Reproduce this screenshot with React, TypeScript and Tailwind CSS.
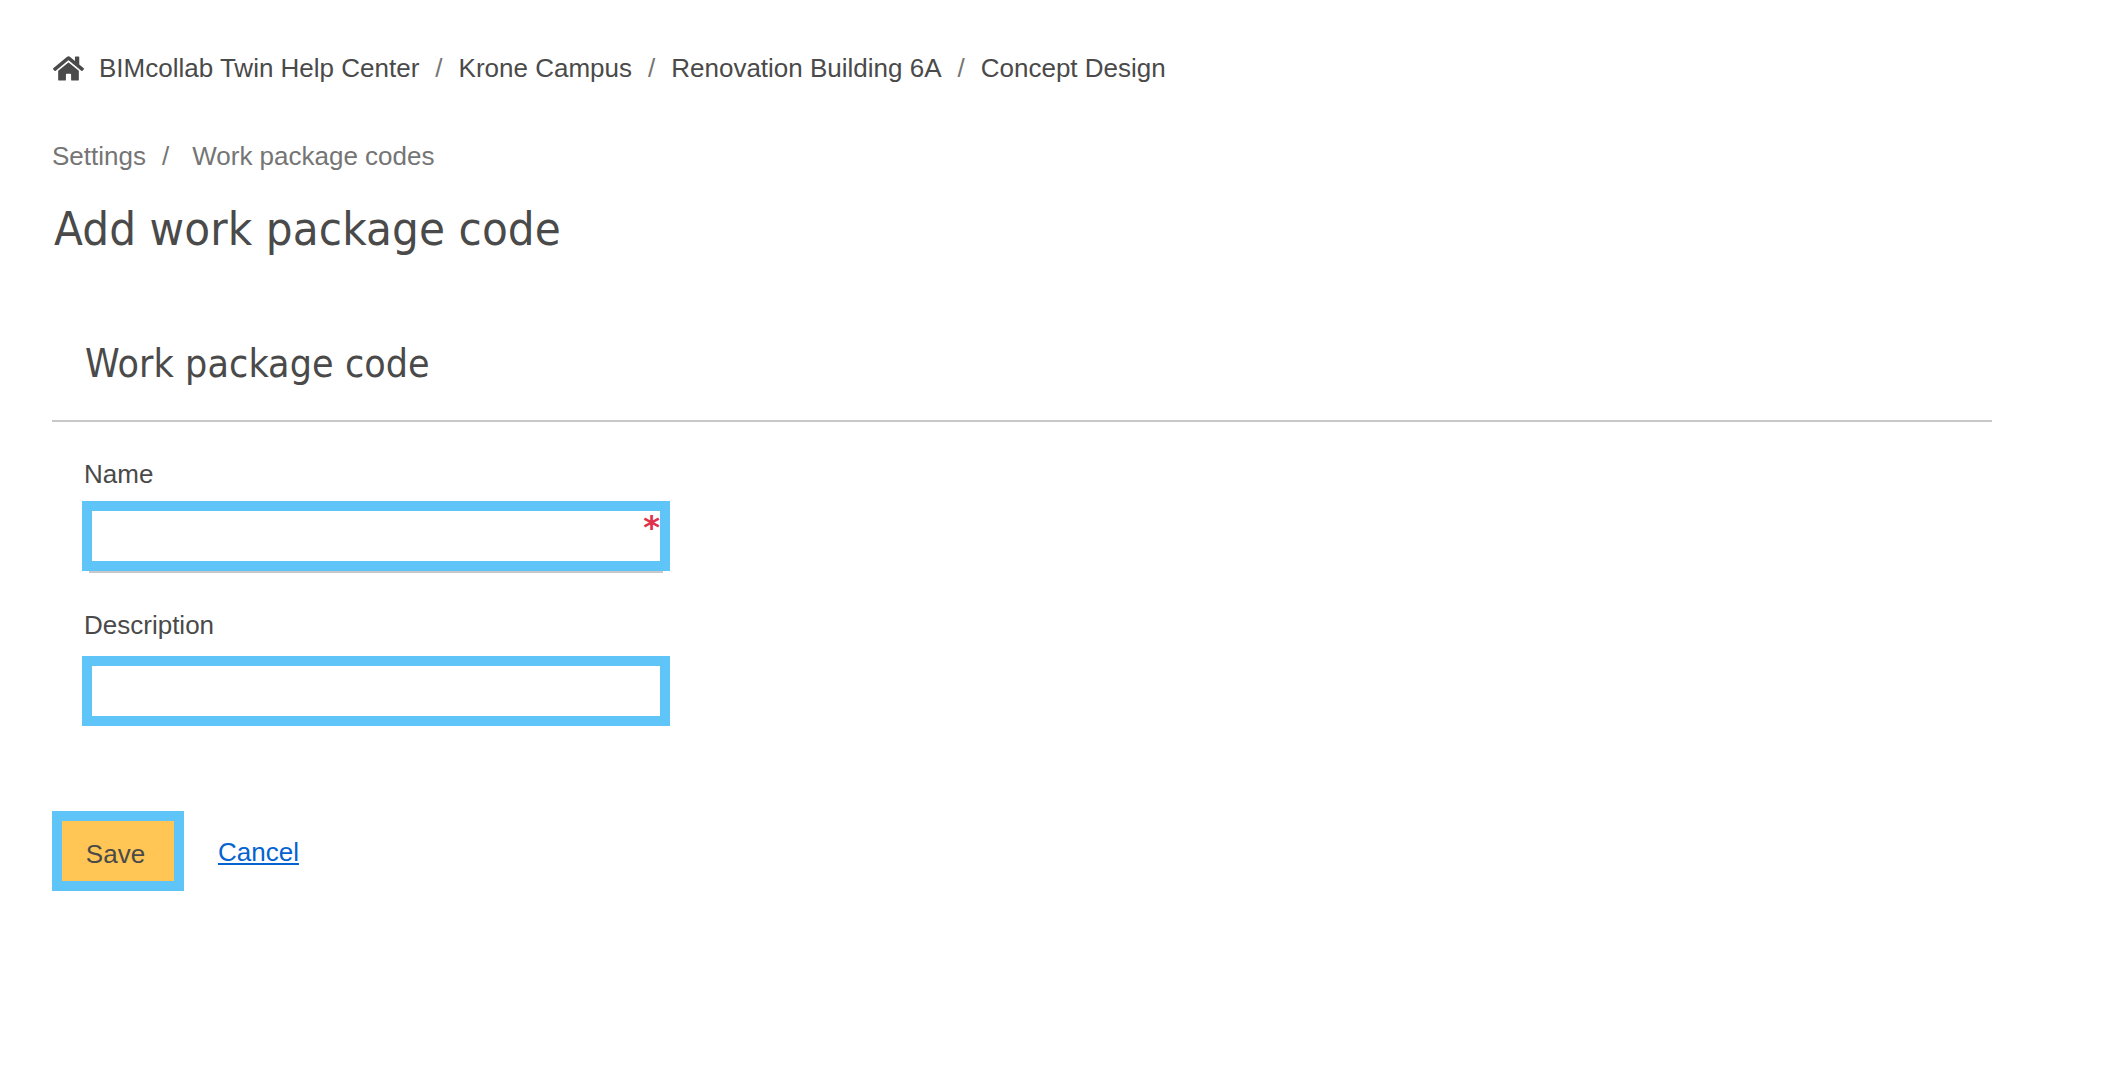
import { FaHome } from 'react-icons/fa';

const crumbs = ['BIMcollab Twin Help Center', 'Krone Campus', 'Renovation Building 6A', 'Concept Design'];

export default function App() {
  return (
    <main className="min-h-screen bg-white pl-[52px] pt-[52px] font-['Liberation_Sans',Arial,sans-serif] text-[#4a4a4a]">
      <nav className="flex h-[32px] items-center text-[26px] leading-[32px]">
        <FaHome className="ml-[1px] mr-[15px] text-[31px] text-[#4a4a4a]" />
        {crumbs.map((c, i) => (
          <span key={c} className="flex items-center">
            {i > 0 && <span className="mx-[16px] text-[#757575]">/</span>}
            <a href="#">{c}</a>
          </span>
        ))}
      </nav>

      <div className="mt-[56px] flex h-[32px] items-center text-[26px] leading-[32px] text-[#757575]">
        <a href="#">Settings</a>
        <span className="ml-[16px] mr-[23px]">/</span>
        <a href="#">Work package codes</a>
      </div>

      <h1 className="mt-[29px] h-[56px] pl-[2px] font-['DejaVu_Sans',sans-serif] text-[47px] font-normal leading-[56px] tracking-[0.1px] font-stretch-condensed">
        Add work package code
      </h1>

      <section className="mt-[85px] w-[1940px] border-b-2 border-[#c8c8c8] pb-[34px] pl-[33px]">
        <h2 className="h-[44px] font-['DejaVu_Sans',sans-serif] text-[39px] font-normal leading-[44px] tracking-[0.07px] font-stretch-condensed">
          Work package code
        </h2>
      </section>

      <form className="pl-[30px]">
        <label className="mt-[37px] block h-[30px] pl-[2px] text-[26px] leading-[30px]">Name</label>
        <div className="relative mt-[12px] w-[588px]">
          <input type="text" className="block h-[70px] w-full border-[10px] border-[#5fc4f7] bg-white shadow-[0_9px_0_-7px_#c8c8c8] outline-none" />
          <span className="absolute right-[10px] top-[6px] font-['DejaVu_Sans',sans-serif] text-[32px] font-bold leading-[40px] text-[#e0304a]">*</span>
        </div>

        <label className="mt-[39px] block h-[30px] pl-[2px] text-[26px] leading-[30px]">Description</label>
        <input type="text" className="mt-[16px] block h-[70px] w-[588px] border-[10px] border-[#5fc4f7] bg-white outline-none" />
      </form>

      <div className="mt-[85px] flex items-center">
        <button type="button" className="h-[80px] w-[132px] border-[10px] border-[#5fc4f7] bg-[#ffc655] pr-[5px] pt-[6px] text-[26px] text-[#4a4a4a]">
          Save
        </button>
        <a href="#" className="ml-[34px] mt-[2px] text-[26px] text-[#0563d1] underline">
          Cancel
        </a>
      </div>
    </main>
  );
}
